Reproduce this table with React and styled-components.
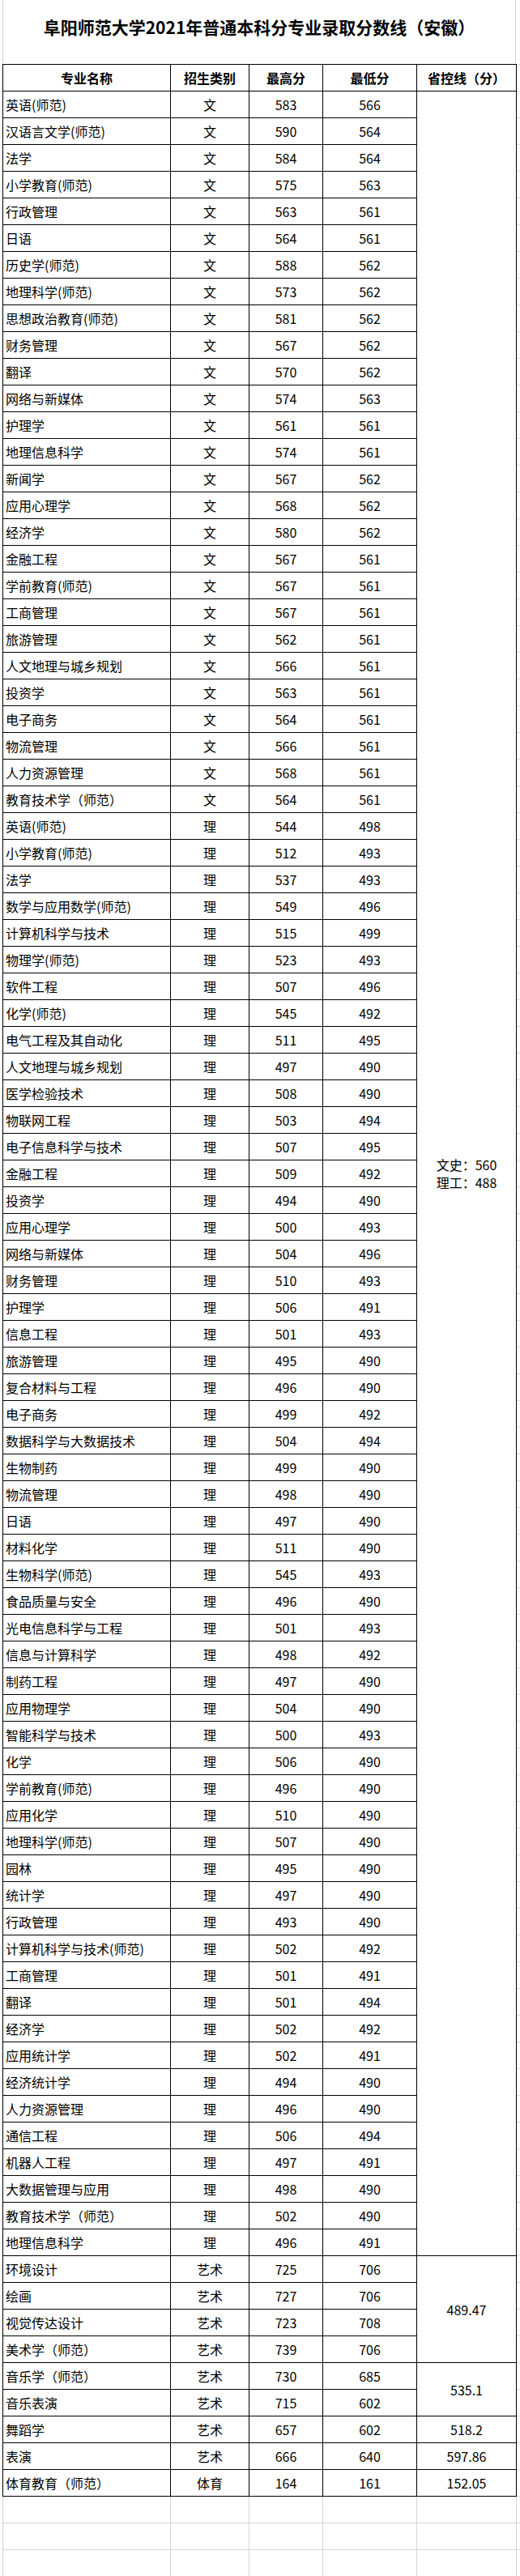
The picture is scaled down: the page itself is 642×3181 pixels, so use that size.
import React from "react";
import styled, { createGlobalStyle } from "styled-components";

const GlobalStyle = createGlobalStyle`
  html, body {
    margin: 0;
    padding: 0;
    background: #ffffff;
  }
  body {
    font-family: "Liberation Sans Narrow", "Noto Sans CJK SC", sans-serif;
    color: #000000;
  }
`;

const Sheet = styled.div`
  width: 642px;
  padding-left: 3px;
  box-sizing: border-box;
`;

const Title = styled.div`
  width: 634px;
  height: 79px;
  box-sizing: border-box;
  border-left: 1px solid #d4d4d4;
  border-right: 1px solid #d4d4d4;
  display: flex;
  align-items: center;
  justify-content: center;
  font-family: "Noto Sans CJK SC", sans-serif;
  font-weight: 700;
  font-size: 21px;
  padding-bottom: 14px;
`;

const GridArea = styled.div`
  background: repeating-linear-gradient(
    to bottom,
    #d9d9d9 0 1px,
    transparent 1px 33px
  );
`;

const Table = styled.table`
  width: 634px;
  table-layout: fixed;
  border-collapse: collapse;
  background: #ffffff;
  font-size: 16px;
`;

const Row = styled.tr`
  height: 33px;
`;

const Head = styled.th`
  padding: 0;
  border: 1px solid #000000;
  font-family: "Noto Sans CJK SC", sans-serif;
  font-weight: 700;
  font-size: 16px;
  text-align: center;
  vertical-align: middle;
`;

const Cell = styled.td`
  padding: 0 ${(p) => (p.$left ? "3px" : "0")};
  border: 1px solid #000000;
  text-align: ${(p) => (p.$left ? "left" : "center")};
  vertical-align: middle;
  white-space: nowrap;
  line-height: 22px;
  overflow: hidden;
`;

const Lines = styled.div`
  display: inline-block;
  text-align: left;
`;

const Filler = styled.table`
  width: 634px;
  table-layout: fixed;
  border-collapse: collapse;
`;

const BlankCell = styled.td`
  height: 32px;
  padding: 0;
  border: 1px solid #d4d4d4;
  border-top: none;
`;

const widths = [207, 97, 91, 116, 123];

const rows = [
  ["英语(师范)", "文", 583, 566],
  ["汉语言文学(师范)", "文", 590, 564],
  ["法学", "文", 584, 564],
  ["小学教育(师范)", "文", 575, 563],
  ["行政管理", "文", 563, 561],
  ["日语", "文", 564, 561],
  ["历史学(师范)", "文", 588, 562],
  ["地理科学(师范)", "文", 573, 562],
  ["思想政治教育(师范)", "文", 581, 562],
  ["财务管理", "文", 567, 562],
  ["翻译", "文", 570, 562],
  ["网络与新媒体", "文", 574, 563],
  ["护理学", "文", 561, 561],
  ["地理信息科学", "文", 574, 561],
  ["新闻学", "文", 567, 562],
  ["应用心理学", "文", 568, 562],
  ["经济学", "文", 580, 562],
  ["金融工程", "文", 567, 561],
  ["学前教育(师范)", "文", 567, 561],
  ["工商管理", "文", 567, 561],
  ["旅游管理", "文", 562, 561],
  ["人文地理与城乡规划", "文", 566, 561],
  ["投资学", "文", 563, 561],
  ["电子商务", "文", 564, 561],
  ["物流管理", "文", 566, 561],
  ["人力资源管理", "文", 568, 561],
  ["教育技术学（师范）", "文", 564, 561],
  ["英语(师范)", "理", 544, 498],
  ["小学教育(师范)", "理", 512, 493],
  ["法学", "理", 537, 493],
  ["数学与应用数学(师范)", "理", 549, 496],
  ["计算机科学与技术", "理", 515, 499],
  ["物理学(师范)", "理", 523, 493],
  ["软件工程", "理", 507, 496],
  ["化学(师范)", "理", 545, 492],
  ["电气工程及其自动化", "理", 511, 495],
  ["人文地理与城乡规划", "理", 497, 490],
  ["医学检验技术", "理", 508, 490],
  ["物联网工程", "理", 503, 494],
  ["电子信息科学与技术", "理", 507, 495],
  ["金融工程", "理", 509, 492],
  ["投资学", "理", 494, 490],
  ["应用心理学", "理", 500, 493],
  ["网络与新媒体", "理", 504, 496],
  ["财务管理", "理", 510, 493],
  ["护理学", "理", 506, 491],
  ["信息工程", "理", 501, 493],
  ["旅游管理", "理", 495, 490],
  ["复合材料与工程", "理", 496, 490],
  ["电子商务", "理", 499, 492],
  ["数据科学与大数据技术", "理", 504, 494],
  ["生物制药", "理", 499, 490],
  ["物流管理", "理", 498, 490],
  ["日语", "理", 497, 490],
  ["材料化学", "理", 511, 490],
  ["生物科学(师范)", "理", 545, 493],
  ["食品质量与安全", "理", 496, 490],
  ["光电信息科学与工程", "理", 501, 493],
  ["信息与计算科学", "理", 498, 492],
  ["制药工程", "理", 497, 490],
  ["应用物理学", "理", 504, 490],
  ["智能科学与技术", "理", 500, 493],
  ["化学", "理", 506, 490],
  ["学前教育(师范)", "理", 496, 490],
  ["应用化学", "理", 510, 490],
  ["地理科学(师范)", "理", 507, 490],
  ["园林", "理", 495, 490],
  ["统计学", "理", 497, 490],
  ["行政管理", "理", 493, 490],
  ["计算机科学与技术(师范)", "理", 502, 492],
  ["工商管理", "理", 501, 491],
  ["翻译", "理", 501, 494],
  ["经济学", "理", 502, 492],
  ["应用统计学", "理", 502, 491],
  ["经济统计学", "理", 494, 490],
  ["人力资源管理", "理", 496, 490],
  ["通信工程", "理", 506, 494],
  ["机器人工程", "理", 497, 491],
  ["大数据管理与应用", "理", 498, 490],
  ["教育技术学（师范）", "理", 502, 490],
  ["地理信息科学", "理", 496, 491],
  ["环境设计", "艺术", 725, 706],
  ["绘画", "艺术", 727, 706],
  ["视觉传达设计", "艺术", 723, 708],
  ["美术学（师范）", "艺术", 739, 706],
  ["音乐学（师范）", "艺术", 730, 685],
  ["音乐表演", "艺术", 715, 602],
  ["舞蹈学", "艺术", 657, 602],
  ["表演", "艺术", 666, 640],
  ["体育教育（师范）", "体育", 164, 161],
];

// merged 省控线 cells, keyed by the row where they start
const lines = {
  0: { span: 81, text: ["文史：560", "理工：488"] },
  81: { span: 4, text: ["489.47"] },
  85: { span: 2, text: ["535.1"] },
  87: { span: 1, text: ["518.2"] },
  88: { span: 1, text: ["597.86"] },
  89: { span: 1, text: ["152.05"] },
};

const Cols = () => (
  <colgroup>
    {widths.map((w, i) => (
      <col key={i} style={{ width: w }} />
    ))}
  </colgroup>
);

export default function App() {
  return (
    <Sheet>
      <GlobalStyle />
      <Title>阜阳师范大学2021年普通本科分专业录取分数线（安徽）</Title>
      <GridArea>
        <Table>
          <Cols />
          <thead>
            <Row>
              <Head>专业名称</Head>
              <Head>招生类别</Head>
              <Head>最高分</Head>
              <Head>最低分</Head>
              <Head>省控线（分）</Head>
            </Row>
          </thead>
          <tbody>
            {rows.map((r, i) => (
              <Row key={i}>
                <Cell $left>{r[0]}</Cell>
                <Cell>{r[1]}</Cell>
                <Cell>{r[2]}</Cell>
                <Cell>{r[3]}</Cell>
                {lines[i] && (
                  <Cell rowSpan={lines[i].span}>
                    <Lines>
                      {lines[i].text.map((t) => (
                        <div key={t}>{t}</div>
                      ))}
                    </Lines>
                  </Cell>
                )}
              </Row>
            ))}
          </tbody>
        </Table>
        <Filler>
          <Cols />
          <tbody>
            {[0, 1, 2].map((k) => (
              <tr key={k}>
                {widths.map((w, i) => (
                  <BlankCell key={i} />
                ))}
              </tr>
            ))}
          </tbody>
        </Filler>
      </GridArea>
    </Sheet>
  );
}
